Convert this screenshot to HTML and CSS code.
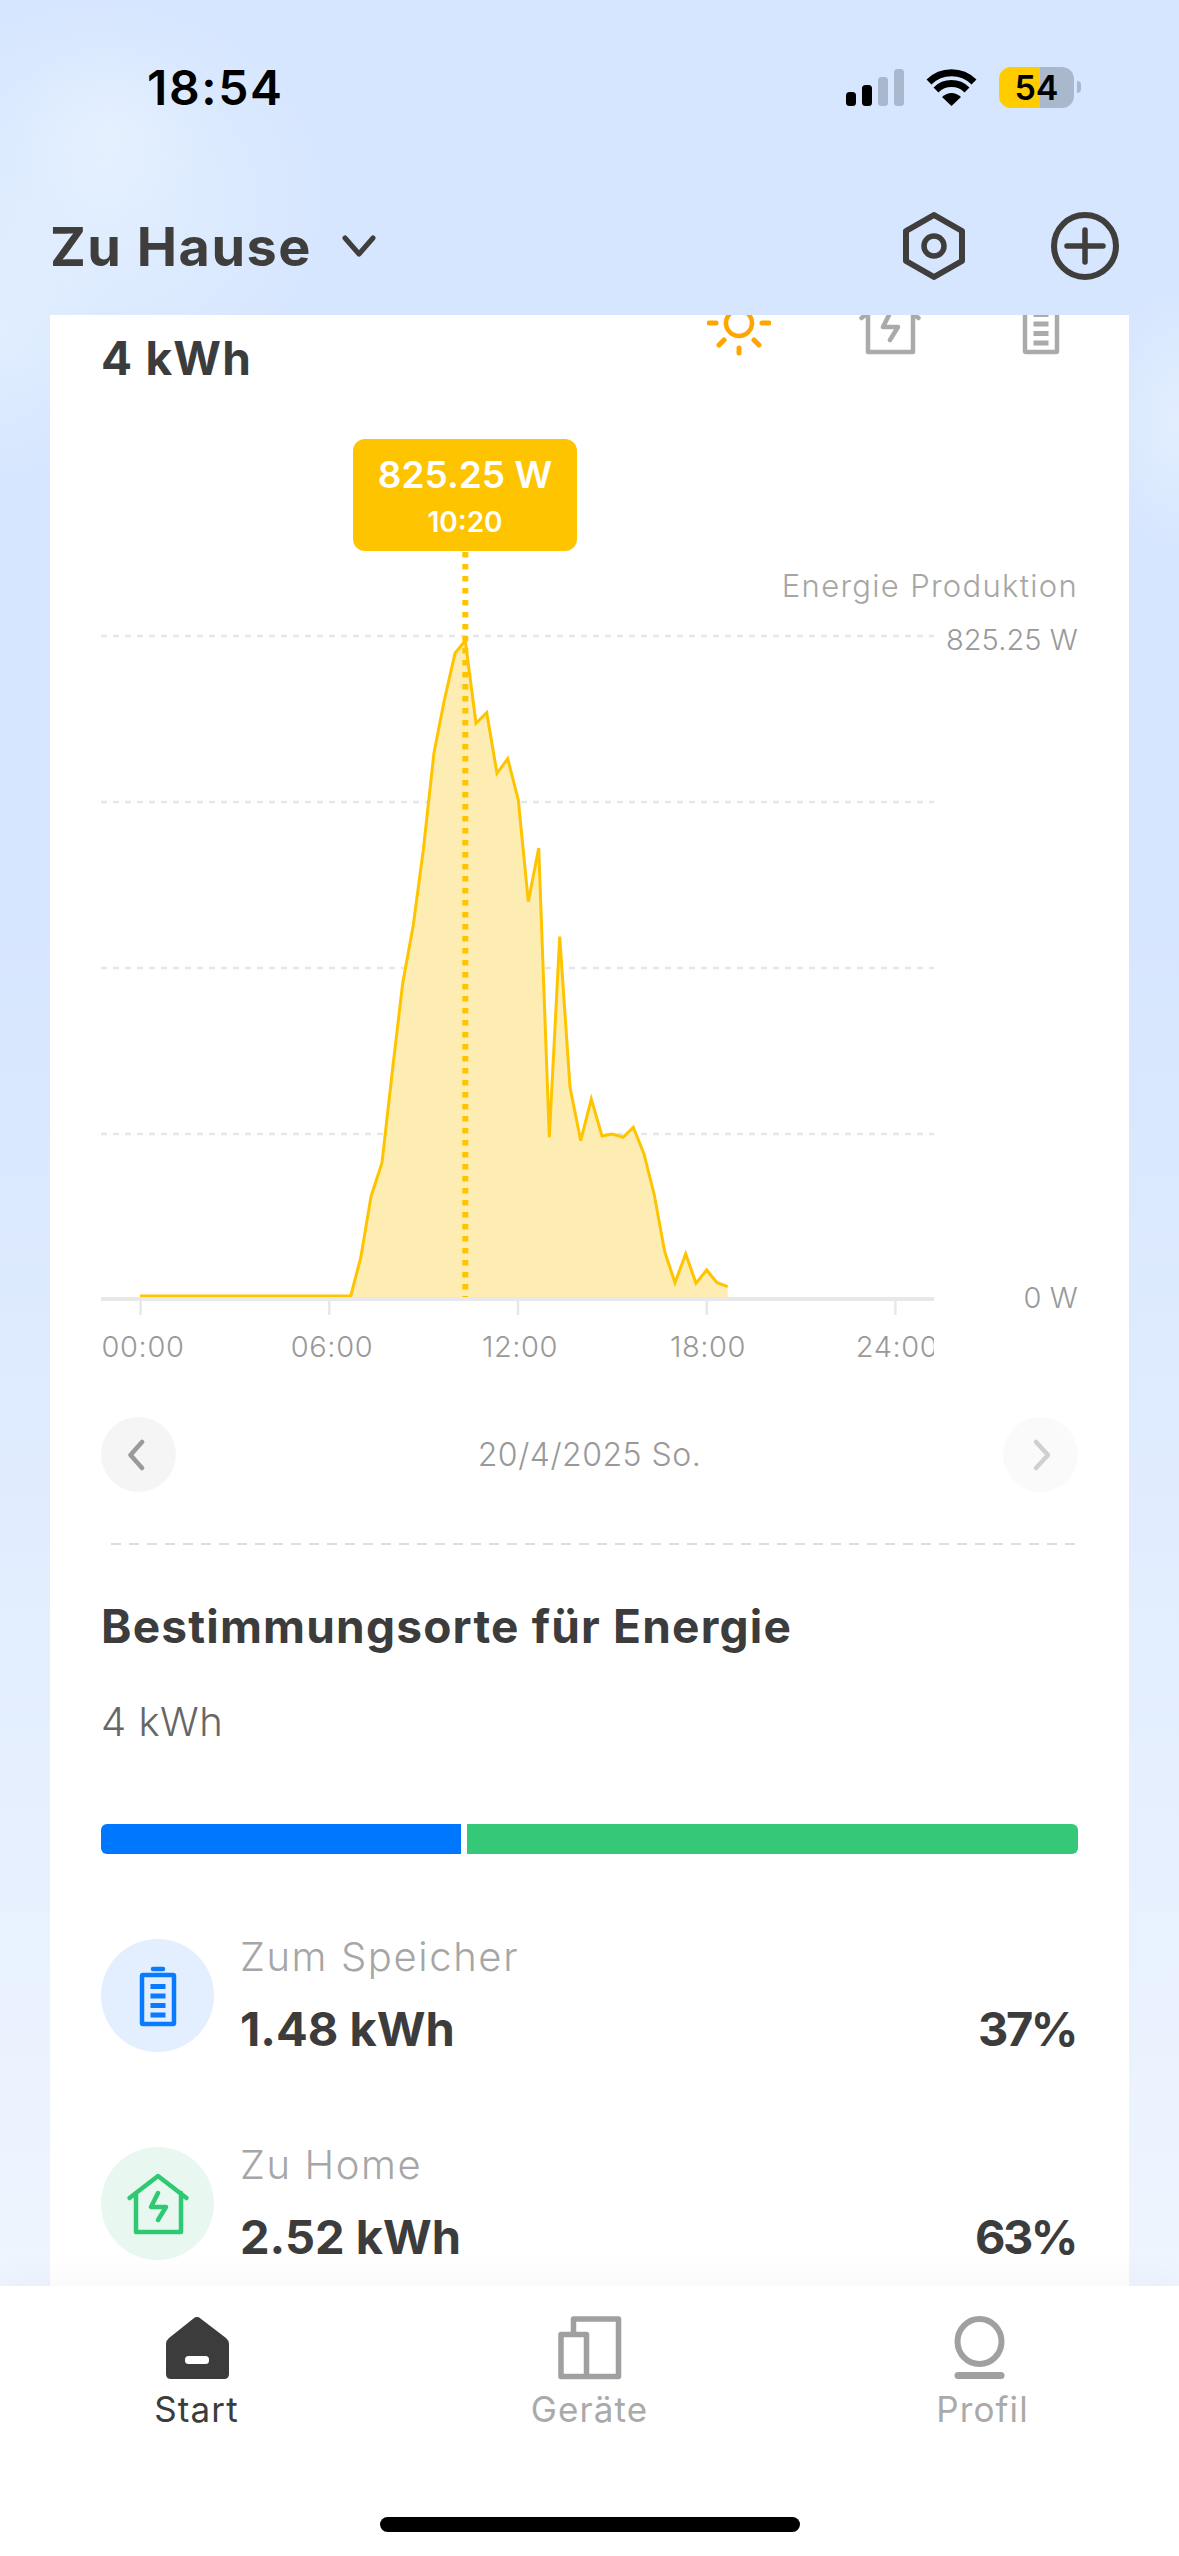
FILE: index.html
```html
<!DOCTYPE html>
<html lang="de">
<head>
    <meta charset="UTF-8" />
    <title>Zu Hause</title>
    <link rel="stylesheet" href="styles.css">
</head>
<body>
    <svg class="defs" width="0" height="0">
        <symbol id="house-bolt" viewBox="0 0 64 64">
            <path d="M3.5 26 L32 4 L60.5 26 M10 21 V60 H55 V21" fill="none" stroke="currentColor" stroke-width="4.5" stroke-linecap="round" stroke-linejoin="round"/>
            <path d="M32 21 L25 35 H40 L32 48" fill="none" stroke="currentColor" stroke-width="4.5" stroke-linecap="round" stroke-linejoin="round"/>
        </symbol>
        <symbol id="battery" viewBox="0 0 64 64">
            <path d="M27 5 H37" fill="none" stroke="currentColor" stroke-width="4.5" stroke-linecap="round"/>
            <rect x="16" y="11" width="32" height="49" rx="1" fill="none" stroke="currentColor" stroke-width="4.5"/>
            <rect x="24.5" y="20" width="15" height="5" fill="currentColor"/>
            <rect x="24.5" y="29.5" width="15" height="5" fill="currentColor"/>
            <rect x="24.5" y="39" width="15" height="5" fill="currentColor"/>
            <rect x="24.5" y="48.5" width="15" height="5" fill="currentColor"/>
        </symbol>
    </svg>

    <div class="status-bar">
        <span class="status-time">18:54</span>
        <div class="status-icons">
            <svg class="signal" width="58" height="37" viewBox="0 0 58 37">
                <rect x="0" y="23" width="10" height="14" rx="3.5" fill="#000"/>
                <rect x="16" y="16" width="10" height="21" rx="3.5" fill="#000"/>
                <rect x="32" y="8" width="10" height="29" rx="3.5" fill="#a9b8cc"/>
                <rect x="48" y="0" width="10" height="37" rx="3.5" fill="#a9b8cc"/>
            </svg>
            <svg class="wifi" width="51" height="37" viewBox="0 0 51 37">
                <path d="M3 13 A32 32 0 0 1 48 13" fill="none" stroke="#000" stroke-width="7"/>
                <path d="M10 21 A22 22 0 0 1 41 21" fill="none" stroke="#000" stroke-width="7"/>
                <path d="M25.5 37 L16 28 Q25.5 20 35 28 Z" fill="#000"/>
            </svg>
            <div class="battery-wrap">
                <div class="battery-level">54</div>
                <div class="battery-nub"></div>
            </div>
        </div>
    </div>

    <header class="top-bar">
        <div class="home-switch">
            <h1>Zu Hause</h1>
            <svg width="34" height="23" viewBox="0 0 34 23">
                <path d="M3 3 L17 19 L31 3" fill="none" stroke="#3f3e3c" stroke-width="5" stroke-linecap="round" stroke-linejoin="round"/>
            </svg>
        </div>
        <div class="top-actions">
            <svg width="68" height="68" viewBox="0 0 68 68">
                <path d="M34 3 L62 19 V49 L34 65 L6 49 V19 Z" fill="none" stroke="#3f3e3c" stroke-width="6" stroke-linejoin="round"/>
                <circle cx="34" cy="34" r="10" fill="none" stroke="#3f3e3c" stroke-width="5.5"/>
            </svg>
            <svg width="68" height="68" viewBox="0 0 68 68">
                <circle cx="34" cy="34" r="31" fill="none" stroke="#3f3e3c" stroke-width="6"/>
                <path d="M34 18 V50 M16 34 H52" fill="none" stroke="#3f3e3c" stroke-width="5.5" stroke-linecap="round"/>
            </svg>
        </div>
    </header>

    <main class="card">
        <div class="summary">
            <span class="summary-value">4 kWh</span>
            <div class="summary-tabs">
                <svg class="sun" width="64" height="64" viewBox="0 0 64 64">
                    <circle cx="32" cy="31" r="13" fill="none" stroke="currentColor" stroke-width="4.5"/>
                    <path d="M2 31 H9 M55 31 H62 M12 53 L17 48 M52 53 L47 48 M32 56 V61" fill="none" stroke="currentColor" stroke-width="5" stroke-linecap="round"/>
                </svg>
                <svg class="grey-icon" width="64" height="64"><use href="#house-bolt"/></svg>
                <svg class="grey-icon" width="64" height="64"><use href="#battery"/></svg>
            </div>
        </div>

        <div class="chart">
            <svg width="977" height="950" viewBox="101 430 977 950">
                <defs>
                    <clipPath id="axis-clip"><rect x="100" y="1300" width="834" height="80"/></clipPath>
                </defs>
                <g class="grid">
                    <path d="M101 636 H934 M101 802 H934 M101 968 H934 M101 1134 H934"/>
                </g>
                <polygon class="area" points="350.7,1297 360.7,1258 371,1196.7 382,1162.7 392.7,1068 402.7,983.3 413.3,925 423.3,850 434,752.7 444,701.7 455,653.3 465.3,640.7 476,723.3 486.7,712.7 497,773.3 507.7,758.7 518.3,800 528.3,901.7 538.7,848 549.3,1137.3 559.7,936.7 570,1087.3 580.7,1140.7 591.3,1099.3 602,1136 612.3,1134 623,1137.3 633.3,1127.3 644,1154 654.3,1195 664.7,1251.7 675,1282.7 685.7,1254 696,1283.3 706.7,1270 717,1282.7 727.7,1286.7 727.7,1297"/>
                <polyline class="line" points="140,1296 350.7,1296 360.7,1258 371,1196.7 382,1162.7 392.7,1068 402.7,983.3 413.3,925 423.3,850 434,752.7 444,701.7 455,653.3 465.3,640.7 476,723.3 486.7,712.7 497,773.3 507.7,758.7 518.3,800 528.3,901.7 538.7,848 549.3,1137.3 559.7,936.7 570,1087.3 580.7,1140.7 591.3,1099.3 602,1136 612.3,1134 623,1137.3 633.3,1127.3 644,1154 654.3,1195 664.7,1251.7 675,1282.7 685.7,1254 696,1283.3 706.7,1270 717,1282.7 727.7,1286.7"/>
                <path class="marker" d="M465.3 552 V1297"/>
                <path class="axis" d="M101 1299 H934"/>
                <path class="ticks" d="M140.6 1300 V1315 M329.3 1300 V1315 M518 1300 V1315 M706.7 1300 V1315 M895.4 1300 V1315"/>
                <g clip-path="url(#axis-clip)">
                    <text class="label mid" x="143" y="1357">00:00</text>
                    <text class="label mid" x="332" y="1357">06:00</text>
                    <text class="label mid" x="520" y="1357">12:00</text>
                    <text class="label mid" x="708" y="1357">18:00</text>
                    <text class="label mid" x="897" y="1357">24:00</text>
                </g>
                <text class="label end wide" x="1078" y="597">Energie Produktion</text>
                <text class="label end tight" x="1078" y="650">825.25 W</text>
                <text class="label end tight" x="1078" y="1308">0 W</text>
            </svg>
            <div class="tooltip">
                <div class="tooltip-value">825.25 W</div>
                <div class="tooltip-time">10:20</div>
            </div>
        </div>

        <div class="date-nav">
            <div class="date-btn">
                <svg width="22" height="34" viewBox="0 0 22 34"><path d="M14 4 L2.5 17 L14 30" fill="none" stroke="#9a9a9a" stroke-width="4.5" stroke-linecap="round" stroke-linejoin="round"/></svg>
            </div>
            <span class="date-text">20/4/2025 So.</span>
            <div class="date-btn disabled">
                <svg width="22" height="34" viewBox="0 0 22 34"><path d="M6 4 L18 17 L6 30" fill="none" stroke="#d0d0d0" stroke-width="4.5" stroke-linecap="round" stroke-linejoin="round"/></svg>
            </div>
        </div>

        <div class="divider"></div>

        <h2>Bestimmungsorte für Energie</h2>
        <div class="total">4 kWh</div>

        <div class="split-bar">
            <div class="split-store"></div>
            <div class="split-home"></div>
        </div>

        <div class="dest-row first">
            <div class="dest-icon store">
                <svg width="64" height="64"><use href="#battery"/></svg>
            </div>
            <div class="dest-text">
                <div class="dest-label">Zum Speicher</div>
                <div class="dest-values">
                    <span>1.48 kWh</span>
                    <span class="dest-percent">37%</span>
                </div>
            </div>
        </div>

        <div class="dest-row">
            <div class="dest-icon home">
                <svg width="64" height="64"><use href="#house-bolt"/></svg>
            </div>
            <div class="dest-text">
                <div class="dest-label">Zu Home</div>
                <div class="dest-values">
                    <span>2.52 kWh</span>
                    <span class="dest-percent">63%</span>
                </div>
            </div>
        </div>
    </main>

    <footer class="tab-bar">
        <nav class="tabs">
            <a class="tab active">
                <svg width="64" height="64" viewBox="0 0 64 64">
                    <path d="M28.5 2.5 a5 5 0 0 1 7 0 L61 22 Q64 24.5 64 28 V58 Q64 63 59 63 H6 Q1 63 1 58 V28 Q1 24.5 4 22 Z" fill="#3c3c3c"/>
                    <rect x="20" y="40" width="24" height="8" rx="3.5" fill="#fff"/>
                </svg>
                <span>Start</span>
            </a>
            <a class="tab">
                <svg width="64" height="64" viewBox="0 0 64 64">
                    <path d="M15.5 16 V3 H60.5 V60.5 H3 V18.5 H28.5 V60.5" fill="none" stroke="#a0a0a0" stroke-width="5.5" stroke-linejoin="round"/>
                </svg>
                <span>Geräte</span>
            </a>
            <a class="tab">
                <svg width="64" height="64" viewBox="0 0 64 64">
                    <ellipse cx="28.5" cy="25.5" rx="22" ry="22.5" fill="none" stroke="#a0a0a0" stroke-width="6"/>
                    <rect x="3.5" y="56" width="50" height="7" rx="3.5" fill="#a0a0a0"/>
                </svg>
                <span>Profil</span>
            </a>
        </nav>
        <div class="home-indicator"></div>
    </footer>
</body>
</html>
```

FILE: styles.css
```css
html, body {
    margin: 0;
    padding: 0;
}
body {
    width: 1179px;
    height: 2556px;
    overflow: hidden;
    display: flex;
    flex-direction: column;
    font-family: Inter, "Noto Sans", sans-serif;
    color: #3c3c3c;
    background-color: #d6e6fe;
    background-image:
        radial-gradient(ellipse 100px 90px at 110px 130px, rgba(240,247,255,0.4), rgba(240,247,255,0)),
        radial-gradient(ellipse 240px 210px at 100px 200px, rgba(228,240,255,0.85), rgba(228,240,255,0)),
        radial-gradient(ellipse 120px 160px at 0 330px, rgba(228,240,255,0.7), rgba(228,240,255,0)),
        radial-gradient(ellipse 80px 140px at 1179px 420px, rgba(232,242,255,0.7), rgba(232,242,255,0)),
        linear-gradient(180deg, rgba(255,255,255,0) 0, rgba(255,255,255,0) 900px, rgba(255,255,255,0.6) 2290px);
}
.defs {
    position: absolute;
}
svg {
    display: block;
    flex-shrink: 0;
}

/* status bar */
.status-bar {
    height: 174px;
    padding: 0 98px 0 147px;
    display: flex;
    justify-content: space-between;
    align-items: center;
    flex-shrink: 0;
}
.status-time {
    font-size: 48px;
    font-weight: 600;
    letter-spacing: 1.6px;
    color: #000;
}
.status-icons {
    display: flex;
    align-items: center;
    gap: 22px;
}
.battery-wrap {
    display: flex;
    align-items: center;
}
.battery-level {
    width: 75px;
    height: 41px;
    border-radius: 12px;
    background: linear-gradient(90deg, #ffcc00 54.7%, #a9b8cc 54.7%);
    color: #000;
    font-size: 34px;
    font-weight: 600;
    line-height: 41px;
    text-align: center;
}
.battery-nub {
    width: 4px;
    height: 12px;
    margin-left: 3px;
    border-radius: 0 6px 6px 0;
    background: #a9b8cc;
}

/* top bar */
.top-bar {
    height: 138px;
    padding: 3px 60px 0 50px;
    display: flex;
    justify-content: space-between;
    align-items: center;
    flex-shrink: 0;
}
.home-switch {
    display: flex;
    align-items: center;
    gap: 30px;
}
.home-switch h1 {
    margin: 0;
    font-size: 54px;
    font-weight: 700;
    letter-spacing: 1.5px;
    color: #3f3e3c;
}
.top-actions {
    display: flex;
    gap: 83px;
}

/* card */
.card {
    flex: 1;
    min-height: 0;
    margin: 0 50px;
    padding: 0 51px;
    background: #fff;
    overflow: hidden;
}
.summary {
    height: 115px;
    display: flex;
    justify-content: space-between;
}
.summary-value {
    margin-top: 15px;
    font-size: 46px;
    font-weight: 700;
    letter-spacing: 1.2px;
    line-height: 56px;
}
.summary-tabs {
    display: flex;
    gap: 87px;
    margin-top: -23px;
    padding-right: 5px;
    height: 64px;
}
.sun {
    color: #ffa500;
}
.grey-icon {
    color: #aaaaaa;
}

/* chart */
.chart {
    position: relative;
    height: 950px;
}
.grid path {
    fill: none;
    stroke: #e6e6ea;
    stroke-width: 2.5;
    stroke-dasharray: 6 6;
}
.area {
    fill: #feedb3;
}
.line {
    fill: none;
    stroke: #ffc400;
    stroke-width: 3;
    stroke-linejoin: miter;
}
.marker {
    fill: none;
    stroke: #ffc400;
    stroke-width: 6;
    stroke-dasharray: 5.5 6.5;
}
.axis {
    fill: none;
    stroke: #e8e8ea;
    stroke-width: 4;
}
.ticks {
    fill: none;
    stroke: #e8e8ea;
    stroke-width: 2.5;
}
.label {
    font-family: Inter, "Noto Sans", sans-serif;
    font-size: 29px;
    font-weight: 300;
    letter-spacing: 0.6px;
    fill: #999999;
}
.label.mid {
    text-anchor: middle;
}
.label.end {
    text-anchor: end;
}
.label.tight {
    letter-spacing: 0.1px;
}
.label.wide {
    font-size: 31px;
    letter-spacing: 1.3px;
    fill: #a6a6a6;
}
.tooltip {
    position: absolute;
    left: 252px;
    top: 9px;
    width: 224px;
    height: 112px;
    border-radius: 12px;
    background: #ffc400;
    color: #fff;
    text-align: center;
}
.tooltip-value {
    margin-top: 12px;
    font-size: 37px;
    font-weight: 600;
    line-height: 48px;
}
.tooltip-time {
    margin-top: 5px;
    font-size: 28px;
    font-weight: 600;
    line-height: 36px;
}

/* date nav */
.date-nav {
    margin-top: 37px;
    display: flex;
    justify-content: space-between;
    align-items: center;
}
.date-btn {
    width: 75px;
    height: 75px;
    border-radius: 50%;
    background: #f5f5f5;
    display: flex;
    justify-content: center;
    align-items: center;
}
.date-btn.disabled {
    background: #fafafa;
}
.date-text {
    font-size: 32px;
    font-weight: 300;
    letter-spacing: 0.5px;
    color: #999999;
}
.divider {
    margin: 51px 3px 0 10px;
    height: 2px;
    background: repeating-linear-gradient(90deg, #dddddd 0, #dddddd 10px, transparent 10px, transparent 18px);
}

/* destinations */
h2 {
    margin: 53px 0 0;
    font-size: 46px;
    font-weight: 700;
    letter-spacing: 1.2px;
    line-height: 56px;
}
.total {
    margin-top: 44px;
    font-size: 40px;
    font-weight: 300;
    letter-spacing: 0.5px;
    line-height: 48px;
    color: #666666;
}
.split-bar {
    margin-top: 78px;
    height: 30px;
    display: flex;
    gap: 6px;
}
.split-store {
    width: 359.7px;
    background: #0077ff;
    border-radius: 6px 0 0 6px;
}
.split-home {
    flex: 1;
    background: #35c878;
    border-radius: 0 6px 6px 0;
}
.dest-row {
    margin-top: 95px;
    height: 113px;
    display: flex;
    gap: 26px;
}
.dest-row.first {
    margin-top: 85px;
}
.dest-icon {
    width: 113px;
    height: 113px;
    border-radius: 50%;
    display: flex;
    justify-content: center;
    align-items: center;
    flex-shrink: 0;
}
.dest-icon.store {
    background: #e3efff;
    color: #0a7bff;
}
.dest-icon.home {
    background: #e8f8f0;
    color: #2fc974;
}
.dest-text {
    flex: 1;
    padding-right: 2px;
}
.dest-label {
    margin-top: -6px;
    font-size: 40px;
    font-weight: 300;
    letter-spacing: 1.6px;
    line-height: 48px;
    color: #a6a6a6;
}
.dest-values {
    margin-top: 20px;
    display: flex;
    justify-content: space-between;
    font-size: 47px;
    font-weight: 700;
    line-height: 56px;
}
.dest-percent {
    letter-spacing: -2.5px;
}

/* tab bar */
.tab-bar {
    height: 270px;
    flex-shrink: 0;
    background: #fff;
    box-shadow: 0 -14px 30px rgba(0,0,0,0.025);
    position: relative;
}
.tabs {
    display: flex;
    padding-top: 30px;
}
.tab {
    flex: 1;
    display: flex;
    flex-direction: column;
    align-items: center;
    gap: 8px;
    font-size: 35px;
    letter-spacing: 1.1px;
    line-height: 42px;
    color: #aaaaaa;
}
.tab.active {
    color: #3c3c3c;
}
.home-indicator {
    width: 420px;
    height: 15px;
    margin: 87px auto 0;
    border-radius: 8px;
    background: #000;
}
```
